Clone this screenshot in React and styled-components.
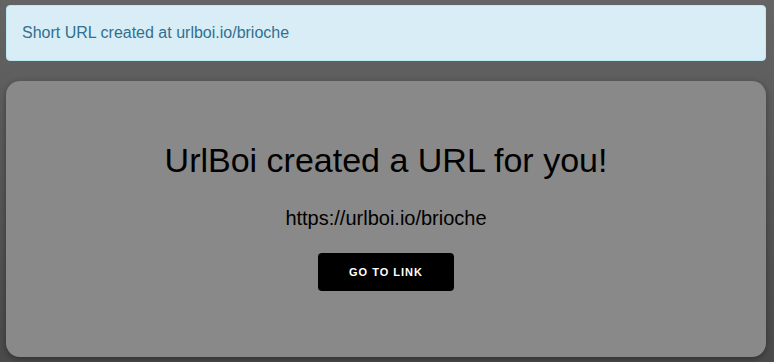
import styled, { createGlobalStyle } from 'styled-components';

const GlobalStyle = createGlobalStyle`
    html, body {
        margin: 0;
        height: 100%;
    }
    body {
        font-family: "Liberation Sans", Arial, sans-serif;
        background: linear-gradient(to bottom, #646464 0%, #4a4a4a 100%);
        min-height: 362px;
    }
`;

const Page = styled.div`
    padding: 5px 8px 5px 6px;
    display: flex;
    flex-direction: column;
    gap: 20px;
`;

const Alert = styled.div`
    background: #d9edf7;
    border: 1px solid #bce8f1;
    border-radius: 4px;
    color: #31708f;
    padding: 15px;
    font-size: 16px;
    line-height: 24px;
`;

const Card = styled.div`
    background: #898989;
    border-radius: 14px;
    box-shadow: 0 2px 6px rgba(0, 0, 0, 0.35);
    height: 276px;
    display: flex;
    flex-direction: column;
    align-items: center;
    padding-top: 59px;
    box-sizing: border-box;
`;

const Title = styled.h1`
    margin: 0;
    font-size: 34px;
    font-weight: normal;
    color: #000;
    line-height: 40px;
`;

const ShortLink = styled.p`
    margin: 26px 0 0;
    font-size: 20px;
    color: #000;
    line-height: 24px;
`;

const LinkButton = styled.a`
    margin-top: 23px;
    display: flex;
    align-items: center;
    justify-content: center;
    width: 136px;
    height: 38px;
    background: #000;
    color: #fff;
    border-radius: 4px;
    font-size: 11px;
    font-weight: bold;
    letter-spacing: 1px;
    text-decoration: none;
    text-transform: uppercase;
`;

const App = () => {
    const url = 'https://urlboi.io/brioche';

    return (
        <>
            <GlobalStyle />
            <Page>
                <Alert>Short URL created at urlboi.io/brioche</Alert>
                <Card>
                    <Title>UrlBoi created a URL for you!</Title>
                    <ShortLink>{url}</ShortLink>
                    <LinkButton href={url}>Go to link</LinkButton>
                </Card>
            </Page>
        </>
    );
};

export default App;
